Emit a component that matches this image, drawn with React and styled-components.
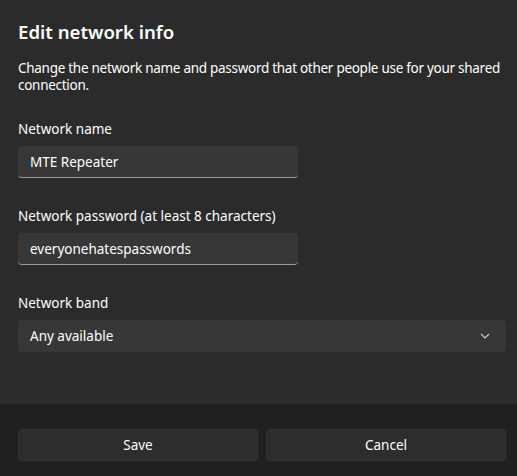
import React from 'react';
import styled, { createGlobalStyle } from 'styled-components';

const Global = createGlobalStyle`
  html, body {
    margin: 0;
    padding: 0;
    background: #202020;
  }
  body {
    font-family: "Noto Sans", "Open Sans", sans-serif;
    color: #ffffff;
  }
`;

const Dialog = styled.div`
  width: 517px;
  height: 476px;
  display: flex;
  flex-flow: column nowrap;
  background: #202020;
`;

const Body = styled.div`
  height: 404px;
  box-sizing: border-box;
  background: #2b2b2b;
  padding: 18px 11px 0 18px;
  display: flex;
  flex-flow: column nowrap;
  align-items: flex-start;
`;

const Title = styled.h1`
  margin: 0 0 14px;
  font-size: 18.6px;
  line-height: 28px;
  font-weight: 600;
`;

const Text = styled.p`
  margin: 0 -8px 25px 0;
  font-size: 13.5px;
  line-height: 17px;
  letter-spacing: -0.28px;
`;

const Label = styled.div`
  font-size: 13.5px;
  line-height: 20px;
  margin-bottom: 7px;
`;

const Field = styled.div`
  width: ${p => p.width || '100%'};
  height: 32px;
  box-sizing: border-box;
  background: #373737;
  border-radius: 4px;
  border-bottom: 1px solid #9a9a9a;
  padding: 0 12px;
  display: flex;
  align-items: center;
  justify-content: space-between;
  font-size: 13.5px;
  margin-bottom: 28px;
`;

const Select = styled(Field)`
  border-bottom: none;
  padding-right: 16px;
`;

const Group = styled.div`
  width: 100%;
`;

const Footer = styled.div`
  flex: 1;
  padding: 25px 11px 0 18px;
  display: grid;
  grid-template-columns: 1fr 1fr;
  gap: 8px;
  align-items: start;
`;

const Button = styled.button`
  height: 32px;
  background: #2d2d2d;
  border: 1px solid #353535;
  border-radius: 4px;
  color: #ffffff;
  font-family: inherit;
  font-size: 13.5px;
`;

const Chevron = () => (
  <svg width="10" height="6" viewBox="0 0 10 6">
    <path d="M1 1l4 4 4-4" fill="none" stroke="#cfcfcf" strokeWidth="1.1" />
  </svg>
);

export default function App() {
  return (
    <Dialog>
      <Global />
      <Body>
        <Title>Edit network info</Title>
        <Text>
          Change the network name and password that other people use for your shared
          connection.
        </Text>
        <Group>
          <Label>Network name</Label>
          <Field width="280px">MTE Repeater</Field>
        </Group>
        <Group>
          <Label>Network password (at least 8 characters)</Label>
          <Field width="280px">everyonehatespasswords</Field>
        </Group>
        <Group>
          <Label>Network band</Label>
          <Select>
            Any available
            <Chevron />
          </Select>
        </Group>
      </Body>
      <Footer>
        <Button>Save</Button>
        <Button>Cancel</Button>
      </Footer>
    </Dialog>
  );
}
